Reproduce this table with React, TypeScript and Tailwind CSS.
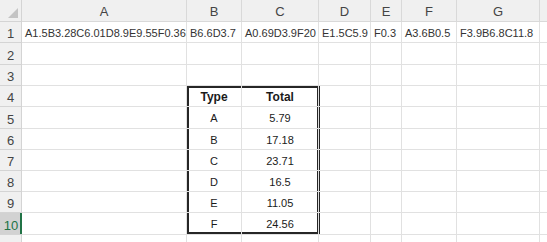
import { ReactNode } from 'react'

const COLUMNS = [
  { key: 'A', width: 'w-[165px]' },
  { key: 'B', width: 'w-[55px]' },
  { key: 'C', width: 'w-[77px]' },
  { key: 'D', width: 'w-[52px]' },
  { key: 'E', width: 'w-[31px]' },
  { key: 'F', width: 'w-[55px]' },
  { key: 'G', width: 'w-[83px]' },
  { key: 'H', width: 'w-[60px]' }
]

const ROW_HEIGHTS = [
  'h-[21px]',
  'h-[22px]',
  'h-[21px]',
  'h-[21px]',
  'h-[22px]',
  'h-[21px]',
  'h-[21px]',
  'h-[21px]',
  'h-[21px]',
  'h-[22px]'
]

const TOTALS = [
  ['A', '5.79'],
  ['B', '17.18'],
  ['C', '23.71'],
  ['D', '16.5'],
  ['E', '11.05'],
  ['F', '24.56']
]

// row 1 holds the raw strings, rows 4-10 hold the summary table in B:C
const cellText = (row: number, col: string): ReactNode => {
  if (row === 1) {
    const first: Record<string, string> = {
      A: 'A1.5B3.28C6.01D8.9E9.55F0.36',
      B: 'B6.6D3.7',
      C: 'A0.69D3.9F20',
      D: 'E1.5C5.9',
      E: 'F0.3',
      F: 'A3.6B0.5',
      G: 'F3.9B6.8C11.8'
    }
    return first[col] ?? ''
  }
  if (row === 4 && col === 'B') return <span className="font-bold text-[12px]">Type</span>
  if (row === 4 && col === 'C') return <span className="font-bold text-[12px]">Total</span>
  if (row >= 5 && row <= 10) {
    if (col === 'B') return TOTALS[row - 5][0]
    if (col === 'C') return TOTALS[row - 5][1]
  }
  return ''
}

// thick frame round B4:C10
const frameClass = (row: number, col: string) => {
  if (row < 4 || row > 10) return ''
  if (col === 'B') {
    if (row === 4) return 'shadow-[inset_2px_0_0_#262626,inset_0_2px_0_#262626]'
    if (row === 10) return 'shadow-[inset_2px_0_0_#262626,inset_0_-2px_0_#262626]'
    return 'shadow-[inset_2px_0_0_#262626]'
  }
  if (col === 'C') {
    if (row === 4) return 'shadow-[inset_-1px_0_0_#262626,inset_0_2px_0_#262626]'
    if (row === 10) return 'shadow-[inset_-1px_0_0_#262626,inset_0_-2px_0_#262626]'
    return 'shadow-[inset_-1px_0_0_#262626]'
  }
  if (col === 'D') return 'shadow-[inset_1px_0_0_#262626]'
  return ''
}

function HeaderRow() {
  return (
    <div className="flex h-[22px] bg-[#f0f0f0] text-[13px] text-[#444]">
      <div className="relative w-[22px] shrink-0 border-r border-b border-[#d4d4d4]">
        <svg className="absolute right-[3px] bottom-[3px]" width="10" height="10" viewBox="0 0 10 10">
          <polygon points="10,0 10,10 0,10" fill="#c4c4c4" />
        </svg>
      </div>
      {COLUMNS.map(c => (
        <div
          key={c.key}
          className={`${c.width} shrink-0 flex items-center justify-center border-r border-b border-[#d9d9d9] pt-[1px]`}
        >
          {c.key === 'H' ? '' : c.key}
        </div>
      ))}
    </div>
  )
}

function SheetRow({ row, height }: { row: number; height: string }) {
  const selected = row === 10
  return (
    <div className={`flex ${height}`}>
      <div
        className={
          selected
            ? 'w-[22px] shrink-0 flex items-center justify-center bg-[#d2d2d2] text-[#217346] border-b border-[#d4d4d4] shadow-[inset_-2px_0_0_#217346] text-[13px] pt-[3px]'
            : 'w-[22px] shrink-0 flex items-center justify-center bg-[#f0f0f0] text-[#444] border-r border-b border-[#d4d4d4] text-[13px] pt-[3px]'
        }
      >
        {row}
      </div>
      {COLUMNS.map(c => {
        const centered = row >= 4 && (c.key === 'B' || c.key === 'C')
        return (
          <div
            key={c.key}
            className={`${c.width} shrink-0 flex items-center whitespace-nowrap border-r border-b border-[#e1e1e1] pt-[2px] ${
              centered ? 'justify-center text-[#1a1a1a]' : 'justify-start pl-[3px] text-[#333]'
            } ${frameClass(row, c.key)}`}
          >
            {cellText(row, c.key)}
          </div>
        )
      })}
    </div>
  )
}

export default function App() {
  return (
    <div className="w-[547px] h-[242px] overflow-hidden bg-white font-['Liberation_Sans',Arial,sans-serif] text-[11px] leading-none">
      <HeaderRow />
      {ROW_HEIGHTS.map((h, i) => (
        <SheetRow key={i} row={i + 1} height={h} />
      ))}
      <div className="flex h-[10px]">
        <div className="w-[22px] shrink-0 bg-[#f0f0f0] border-r border-[#d4d4d4]" />
        {COLUMNS.map(c => (
          <div key={c.key} className={`${c.width} shrink-0 border-r border-[#e1e1e1]`} />
        ))}
      </div>
    </div>
  )
}
